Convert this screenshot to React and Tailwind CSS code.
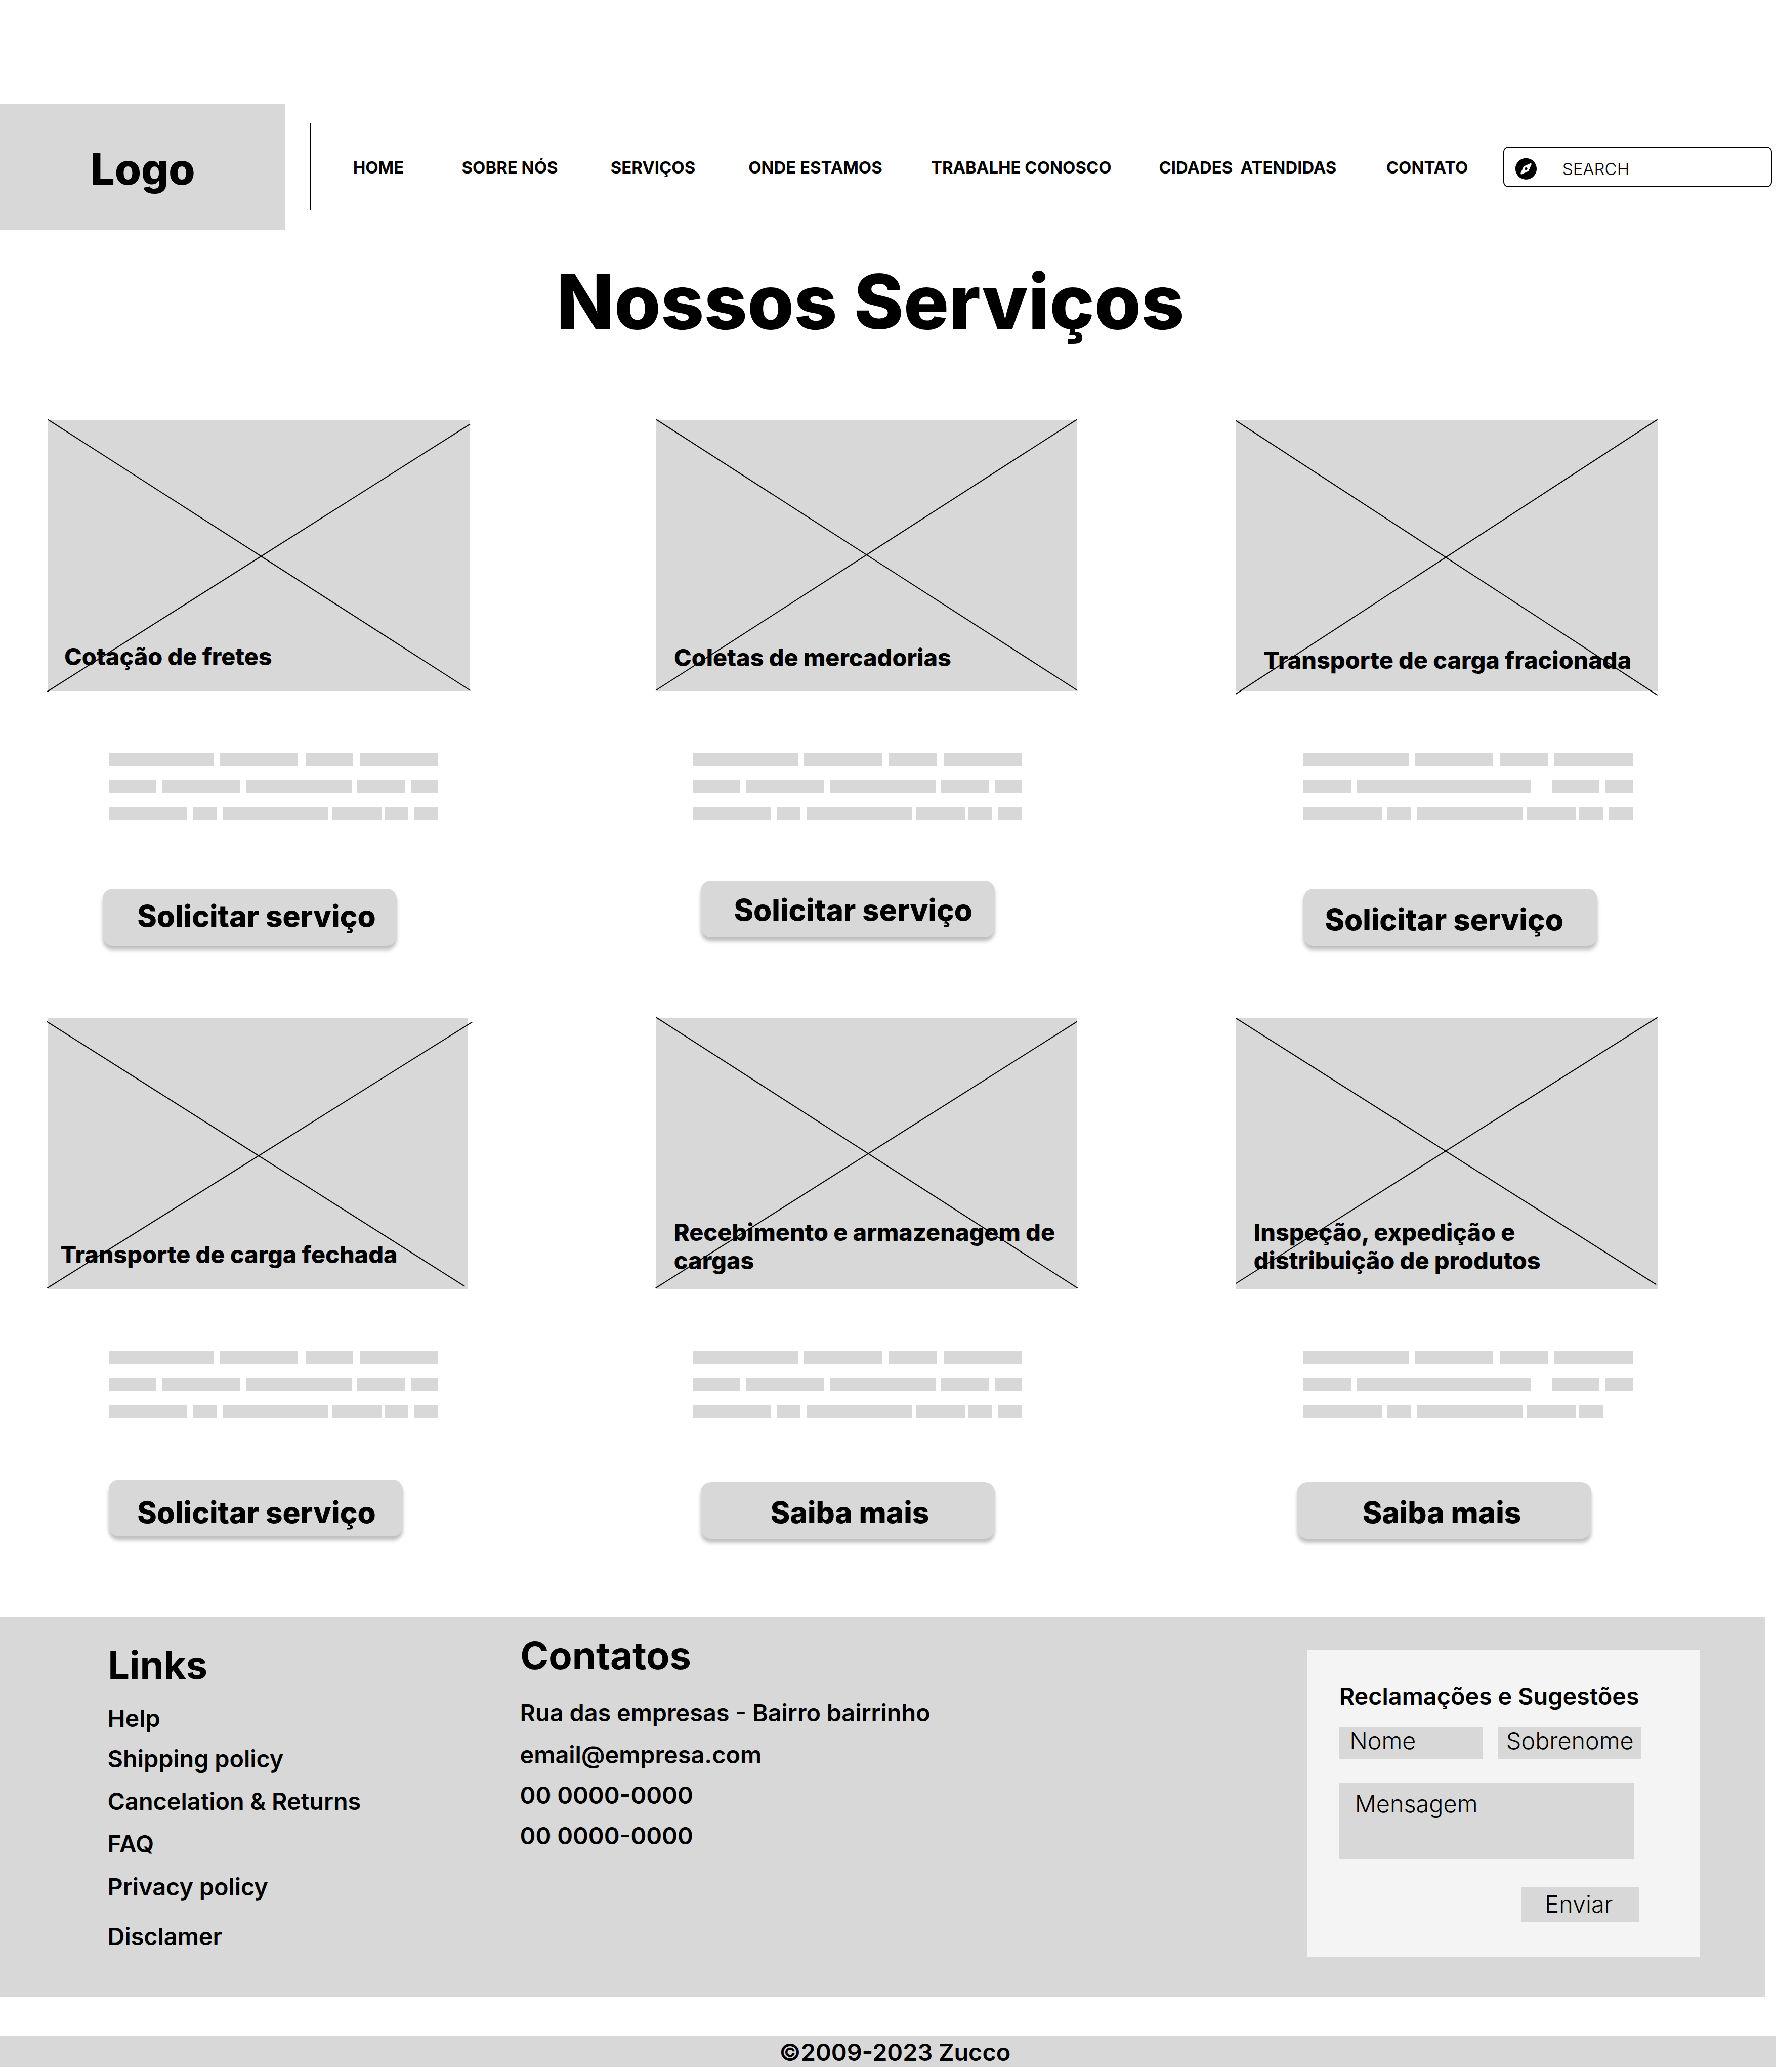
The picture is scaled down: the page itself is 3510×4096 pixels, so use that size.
import React from "react";
import { FaCompass } from "react-icons/fa";

const NAV = [
  "HOME",
  "SOBRE NÓS",
  "SERVIÇOS",
  "ONDE ESTAMOS",
  "TRABALHE CONOSCO",
  "CIDADES  ATENDIDAS",
  "CONTATO",
];

/* Placeholder copy: each row is a list of [start, end] segments in pixels. */
const ROW_1 = [[0, 208.6], [219.9, 374.7], [388.8, 482.8], [496.4, 651.2]];
const ROW_2 = [[0, 94.3], [105.2, 260], [271.8, 479.9], [491.7, 585.6], [597.5, 651.2]];
const ROW_2_WIDE = [[0, 94.3], [105.2, 449.7], [491.7, 585.6], [597.5, 651.2]];
const ROW_3 = [[0, 154.8], [166.1, 213.5], [225.1, 433.8], [442.6, 538.9], [545.4, 592.2], [604, 651.2]];

const DEFAULT_COPY = [ROW_1, ROW_2, ROW_3];

const SERVICES = [
  {
    title: "Cotação de fretes",
    action: "Solicitar serviço",
    figure: "w-[835.6px] pt-[439.6px] pl-[33.3px]",
    lines: [[0.7, -0.8, 992, 635.1], [-0.7, 637.6, 991.3, 10]],
    copy: DEFAULT_COPY,
    copyClass: "ml-[121.1px]",
    button: "ml-[109.3px] mt-[135.9px] pl-[68.2px] pt-[18.3px]",
  },
  {
    title: "Coletas de mercadorias",
    action: "Solicitar serviço",
    figure: "w-[832.9px] pt-[442px] pl-[35.6px]",
    lines: [[1.1, -0.8, 989.5, 635.1], [-0.3, 635.1, 988.1, -0.8]],
    copy: DEFAULT_COPY,
    copyClass: "ml-[72.4px]",
    button: "ml-[88.4px] mt-[119.1px] pl-[65.8px] pt-[23.9px]",
  },
  {
    title: "Transporte de carga fracionada",
    action: "Solicitar serviço",
    figure: "w-[833.1px] pt-[446.9px] pl-[54.2px]",
    lines: [[-0.7, 1.7, 988.4, 645.9], [-0.7, 643.3, 988.4, -0.8]],
    copy: [ROW_1, ROW_2_WIDE, ROW_3],
    copyClass: "ml-[133px]",
    button: "ml-[133px] mt-[135.9px] pl-[42.6px] pt-[26px]",
  },
  {
    title: "Transporte de carga fechada",
    action: "Solicitar serviço",
    figure: "w-[830.3px] pt-[439.6px] pl-[25.8px]",
    lines: [[-1.4, 9.1, 978.6, 630.1], [-0.7, 634.3, 996.2, 10]],
    copy: DEFAULT_COPY,
    copyClass: "ml-[121.1px]",
    button: "ml-[121.1px] mt-[121.5px] pl-[56.4px] pt-[30.2px]",
  },
  {
    title: "Recebimento e armazenagem de cargas",
    action: "Saiba mais",
    figure: "w-[832.9px] pt-[395.2px] pl-[35.5px]",
    lines: [[1.1, -0.8, 989.5, 634.3], [-0.3, 634.3, 988.1, 9.1]],
    copy: DEFAULT_COPY,
    copyClass: "ml-[72.4px]",
    button: "ml-[88.4px] mt-[126.4px] pl-[138.2px] pt-[25.3px]",
  },
  {
    title: "Inspeção, expedição e distribuição de produtos",
    action: "Saiba mais",
    figure: "w-[833.1px] pt-[395.2px] pl-[35px] pr-[200px]",
    lines: [[-0.7, 0.8, 985.6, 626], [-0.7, 623.5, 988.4, -0.8]],
    copy: [ROW_1, ROW_2_WIDE, ROW_3.slice(0, 5)],
    copyClass: "ml-[133px]",
    button: "ml-[121.2px] mt-[126.4px] pl-[128.8px] pt-[25.3px]",
  },
];

const LINKS = [
  ["Help", "mt-[30.3px]"],
  ["Shipping policy", "mt-[23.3px]"],
  ["Cancelation & Returns", "mt-[26.9px]"],
  ["FAQ", "mt-[28px]"],
  ["Privacy policy", "mt-[28px]"],
  ["Disclamer", "mt-[41.1px]"],
];

const CONTACTS = [
  ["Rua das empresas - Bairro bairrinho", "mt-[37.9px]"],
  ["email@empresa.com", "mt-[26.9px]"],
  ["00 0000-0000", "mt-[23.3px]"],
  ["00 0000-0000", "mt-[23.4px]"],
];

function Header() {
  return (
    <header className="flex h-[248.2px] items-start">
      <div className="h-[248.2px] w-[564px] shrink-0 bg-[#d8d8d8] pt-[77.4px] pl-[178.9px] text-[84.6px] leading-[102.5px] font-extrabold">
        Logo
      </div>
      <div className="mt-[37.4px] ml-[49px] h-[173.4px] w-[2px] shrink-0 bg-black" />
      <nav className="mt-[105px] ml-[82.7px] grid shrink-0 grid-cols-[214.9px_294.2px_272.4px_360.8px_450.5px_449.3px_231.6px] text-[32.9px] leading-[40px] font-bold whitespace-pre">
        {NAV.map((item) => (
          <a key={item}>{item}</a>
        ))}
      </nav>
      <div className="mt-[84.4px] flex h-[79.6px] w-[530.8px] shrink-0 items-start rounded-[10px] border-2 border-black pl-[21.4px]">
        <FaCompass className="mt-[20.3px] h-[43.4px] w-[42px]" />
        <span className="mt-[22.5px] ml-[51px] text-[33.1px] leading-[40px] font-light">SEARCH</span>
      </div>
    </header>
  );
}

function ServiceCard({ service }) {
  return (
    <article className="flex flex-col items-start">
      <div className={`relative h-[535.8px] bg-[#d8d8d8] ${service.figure}`}>
        <svg className="absolute inset-0 h-full w-full overflow-visible" stroke="black" strokeWidth="2.4">
          <g transform="scale(0.8424)">
            {service.lines.map(([x1, y1, x2, y2]) => (
              <line key={y1} x1={x1} y1={y1} x2={x2} y2={y2} />
            ))}
          </g>
        </svg>
        <h2 className="relative text-[46.8px] leading-[56.4px] font-extrabold">{service.title}</h2>
      </div>
      <div className={`mt-[122px] flex flex-col gap-[28px] ${service.copyClass}`}>
        {service.copy.map((row, i) => (
          <div key={i} className="flex h-[25.8px]">
            {row.map(([start, end], j) => (
              <span
                key={j}
                className="h-full shrink-0 bg-[#d8d8d8]"
                style={{ width: end - start, marginLeft: j ? start - row[j - 1][1] : 0 }}
              />
            ))}
          </div>
        ))}
      </div>
      <button
        className={`flex h-[112.4px] w-[581.5px] items-start rounded-[20px] bg-[#d8d8d8] text-[58.5px] leading-[70.8px] font-extrabold whitespace-nowrap shadow-[0_7.8px_7.8px_rgba(0,0,0,0.25)] ${service.button}`}
      >
        {service.action}
      </button>
    </article>
  );
}

function FooterColumn({ title, items, className }) {
  return (
    <div className={`shrink-0 ${className}`}>
      <h3 className="ml-[0.6px] text-[75.8px] leading-[94.4px] font-bold">{title}</h3>
      <ul className="text-[46.8px] leading-[56.6px] font-semibold">
        {items.map(([label, gap], i) => (
          <li key={i} className={gap}>
            {label}
          </li>
        ))}
      </ul>
    </div>
  );
}

function FeedbackForm() {
  return (
    <form className="mt-[65.2px] flex h-[607px] w-[776.7px] shrink-0 flex-col items-start bg-[#f4f4f4] pt-[63.4px] pl-[63.2px] text-[46.8px] leading-[56.6px] font-light">
      <h3 className="font-semibold whitespace-nowrap">Reclamações e Sugestões</h3>
      <div className="mt-[32.2px] flex gap-[30px]">
        <div className="h-[62.6px] w-[283px] bg-[#d8d8d8] pl-[20.6px]">
          <div className="-mt-px">Nome</div>
        </div>
        <div className="h-[62.6px] w-[283px] bg-[#d8d8d8] pl-[17.2px]">
          <div className="-mt-px">Sobrenome</div>
        </div>
      </div>
      <div className="mt-[47.4px] h-[150px] w-[582px] bg-[#d8d8d8] pt-[13.8px] pl-[31px]">Mensagem</div>
      <div className="mt-[56px] ml-[359.7px] h-[70.4px] w-[234px] bg-[#d8d8d8] pt-[6.6px] pl-[47px]">Enviar</div>
    </form>
  );
}

export default function App() {
  return (
    <div className="h-[4096px] w-[3510px] overflow-hidden bg-white pt-[205.6px] font-['Inter',sans-serif] text-black">
      <Header />
      <h1 className="mt-[52.3px] ml-[1099.6px] text-[149.1px] leading-[180.3px] font-extrabold">Nossos Serviços</h1>
      <main className="mt-[143.9px] ml-[93.7px] grid grid-cols-[1202.6px_1146.5px_835px] grid-rows-[1182.1px_1184.2px]">
        {SERVICES.map((service) => (
          <ServiceCard key={service.title} service={service} />
        ))}
      </main>
      <footer>
        <div className="flex h-[751px] w-[3489px] items-start bg-[#d8d8d8] pl-[212.6px]">
          <FooterColumn title="Links" items={LINKS} className="mt-[48px] w-[815px]" />
          <FooterColumn title="Contatos" items={CONTACTS} className="mt-[29.1px] w-[1555.9px]" />
          <FeedbackForm />
        </div>
        <div className="mt-[77.1px] h-[60.9px] bg-[#d8d8d8] pt-[4px] pl-[1540px] text-[46.8px] leading-[56.6px] font-semibold">
          ©2009-2023 Zucco
        </div>
      </footer>
    </div>
  );
}
